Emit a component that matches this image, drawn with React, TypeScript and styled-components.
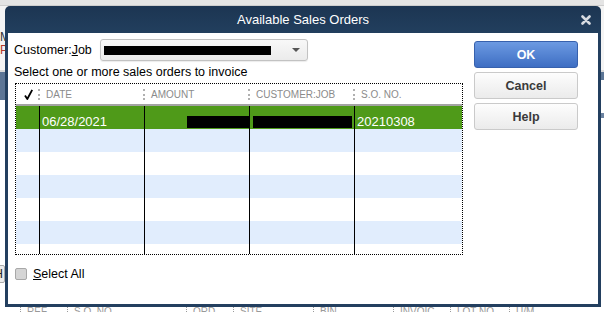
import React from 'react';
import styled, { createGlobalStyle } from 'styled-components';

const GlobalStyle = createGlobalStyle`
  html, body {
    margin: 0;
    padding: 0;
  }
  body {
    font-family: 'Liberation Sans', Arial, sans-serif;
    background: #fff;
  }
`;

const Desktop = styled.div`
  position: relative;
  width: 604px;
  height: 312px;
  overflow: hidden;
  background: #fff;
`;

/* ---------- the app behind the dialog ---------- */

const BackApp = styled.div`
  display: flex;
  flex-direction: column;
  height: 100%;
`;

const TopStrip = styled.div`
  height: 5px;
  background: #e4e4e4;
  border-bottom: 1px solid #cdcdcd;
`;

const MenuArea = styled.div`
  height: 64px;
  background: #f4f4f4;
  display: flex;
  justify-content: space-between;
  border-bottom: 2px solid #d8d8d8;
`;

const MenuLetters = styled.div`
  display: flex;
  flex-direction: column;
  padding-top: 25px;
  font-size: 12px;
  line-height: 13px;
`;

const MenuLetter = styled.span<{ $red?: boolean }>`
  color: ${(p) => (p.$red ? '#b23a2a' : '#333')};
`;

const BandRow = styled.div`
  height: 28px;
  display: flex;
  justify-content: space-between;
`;

const Band = styled.div<{ $h: number }>`
  width: 30px;
  height: ${(p) => p.$h}px;
  background: #5c7595;
`;

const MidArea = styled.div`
  flex: 1;
  display: flex;
  justify-content: space-between;
`;

const MidLeft = styled.div`
  display: flex;
  flex-direction: column;
  justify-content: flex-end;
  padding-bottom: 23px;
`;

const StubButton = styled.div`
  width: 22px;
  height: 18px;
  margin-left: -17px;
  box-sizing: border-box;
  border: 1px solid #aaa;
  border-radius: 2px;
  background: #ececec;
  font-size: 12px;
  line-height: 16px;
  text-align: right;
  padding-right: 1px;
  color: #222;
`;

const MidRight = styled.div`
  display: flex;
  flex-direction: column;
  padding-top: 13px;
  gap: 4px;
  align-items: flex-end;
`;

const Tick = styled.div<{ $color: string }>`
  width: 4px;
  height: 5px;
  background: ${(p) => p.$color};
`;

const BottomHeader = styled.div`
  height: 6px;
  display: flex;
  padding-left: 20px;
  overflow: hidden;
`;

const BottomCol = styled.div<{ $w: number }>`
  width: ${(p) => p.$w}px;
  flex: none;
  border-left: 1px dotted #999;
  padding-left: 6px;
  font-size: 10px;
  line-height: 12px;
  color: #999;
  text-transform: uppercase;
`;

/* ---------- the dialog window ---------- */

const Dialog = styled.div`
  position: absolute;
  left: 5px;
  top: 6px;
  width: 596px;
  height: 301px;
  display: flex;
  flex-direction: column;
`;

const TitleBar = styled.div`
  height: 27px;
  flex: none;
  display: flex;
  align-items: center;
  padding: 0 10px 0 30px;
  border-radius: 5px 5px 0 0;
  background: linear-gradient(#1c3552, #223f5e);
  color: #fff;
`;

const Title = styled.div`
  flex: 1;
  text-align: center;
  font-size: 13px;
  padding-right: 10px;
`;

const CloseIcon = () => (
  <svg width="10" height="10" viewBox="0 0 10 10">
    <path d="M1.5 1.5 L8.5 8.5 M8.5 1.5 L1.5 8.5" stroke="#d7dbe1" strokeWidth="2.6" strokeLinecap="round" />
  </svg>
);

const Body = styled.div`
  flex: 1;
  display: flex;
  background: #fff;
  border: 3px solid #233f5f;
  border-top: none;
  padding: 6px 0 0 6px;
`;

const LeftPane = styled.div`
  width: 449px;
  display: flex;
  flex-direction: column;
  font-size: 12.5px;
  color: #000;
`;

const CustomerRow = styled.div`
  display: flex;
  align-items: center;
  height: 22px;
`;

const Label = styled.span`
  width: 86px;
`;

const Under = styled.span`
  text-decoration: underline;
`;

const Dropdown = styled.div`
  width: 208px;
  height: 22px;
  box-sizing: border-box;
  display: flex;
  align-items: center;
  border: 1px solid #c2c2c2;
  border-radius: 3px;
  background: linear-gradient(#f8f8f8, #ebebeb);
  box-shadow: 0 1px 1px rgba(0, 0, 0, 0.08);
`;

const Redacted = styled.div<{ $w: number; $h: number }>`
  width: ${(p) => p.$w}px;
  height: ${(p) => p.$h}px;
  background: #000;
  flex: none;
`;

const Arrow = styled.div`
  margin-left: auto;
  margin-right: 7px;
  width: 0;
  height: 0;
  border-left: 4px solid transparent;
  border-right: 4px solid transparent;
  border-top: 4px solid #555;
`;

const Hint = styled.div`
  margin-top: 4px;
  line-height: 14px;
`;

const Table = styled.div`
  margin: 4px 0 0 1px;
  width: 448px;
  height: 172px;
  box-sizing: border-box;
  border: 1px dotted #000;
  overflow: hidden;
`;

const columns = '23px 105px 105px 105px 1fr';

const HeaderRow = styled.div`
  display: grid;
  grid-template-columns: ${columns};
  height: 20px;
  border-bottom: 2px solid #a3a3a3;
  align-items: center;
`;

const HeadCell = styled.div`
  display: flex;
  align-items: center;
  gap: 6px;
  font-size: 10px;
  color: #8b8b8b;
  text-transform: uppercase;
  white-space: nowrap;
`;

const CheckHead = styled.div`
  display: flex;
  justify-content: center;
  padding-left: 2px;
`;

const Sep = styled.span`
  width: 0;
  height: 11px;
  border-left: 2px dotted #b0b0b0;
  margin-left: -1px;
`;

const Row = styled.div<{ $tone: 'selected' | 'alt' | 'plain' }>`
  display: grid;
  grid-template-columns: ${columns};
  height: 23px;
  background: ${(p) =>
    p.$tone === 'selected' ? '#4f9a19' : p.$tone === 'alt' ? '#e1edfd' : '#fff'};
  color: ${(p) => (p.$tone === 'selected' ? '#fff' : '#000')};
`;

const Cell = styled.div<{ $align?: 'left' | 'right'; $line?: boolean }>`
  display: flex;
  align-items: flex-end;
  justify-content: ${(p) => (p.$align === 'right' ? 'flex-end' : 'flex-start')};
  border-left: ${(p) => (p.$line ? '1px solid #000' : 'none')};
  padding-left: 2px;
  font-size: 13px;
  line-height: 15px;
`;

const CellBox = styled(Redacted)`
  margin-bottom: 1px;
`;

const SelectAllRow = styled.label`
  display: flex;
  align-items: center;
  gap: 6px;
  margin: 12px 0 0 1px;
  height: 14px;
`;

const CheckBox = styled.span`
  width: 12px;
  height: 12px;
  box-sizing: border-box;
  border: 1px solid #a8a8a8;
  border-radius: 2px;
  background: #d5d5d5;
`;

const ButtonColumn = styled.div`
  margin: 2px 0 0 11px;
  width: 104px;
  display: flex;
  flex-direction: column;
  gap: 4px;
`;

const Button = styled.button<{ $primary?: boolean }>`
  height: 27px;
  box-sizing: border-box;
  border-radius: 3px;
  font-family: 'Liberation Sans', Arial, sans-serif;
  font-size: 12.5px;
  font-weight: bold;
  padding: 0;
  border: 1px solid ${(p) => (p.$primary ? '#3761ad' : '#cacaca')};
  background: ${(p) =>
    p.$primary ? 'linear-gradient(#6c9ae2, #3e6ec3)' : 'linear-gradient(#fdfdfd, #ebebeb)'};
  color: ${(p) => (p.$primary ? '#fff' : '#3a3a3a')};
`;

const CheckMark = () => (
  <svg width="9" height="11" viewBox="0 0 9 11">
    <path d="M1 6.5 L3.3 10 L8.2 0.8" stroke="#000" strokeWidth="1.8" fill="none" strokeLinejoin="round" />
  </svg>
);

type Order = { date: string; soNo: string };

const orders: Order[] = [{ date: '06/28/2021', soNo: '20210308' }];
const emptyRows = 6;

const headers = ['Date', 'Amount', 'Customer:Job', 'S.O. No.'];
const bottomCols: [string, number][] = [
  ['Ref', 40],
  ['S.O. No', 112],
  ['Ord', 40],
  ['Site', 73],
  ['Bin', 73],
  ['Invoic', 50],
  ['Lot No', 52],
  ['U/M', 60],
];

export default function App() {
  return (
    <Desktop>
      <GlobalStyle />
      <BackApp>
        <TopStrip />
        <MenuArea>
          <MenuLetters>
            <MenuLetter>M</MenuLetter>
            <MenuLetter $red>P</MenuLetter>
          </MenuLetters>
        </MenuArea>
        <BandRow>
          <Band $h={28} />
          <Band $h={8} />
        </BandRow>
        <MidArea>
          <MidLeft>
            <StubButton>H</StubButton>
          </MidLeft>
          <MidRight>
            <Tick $color="#6c83a1" />
          </MidRight>
        </MidArea>
        <BottomHeader>
          {bottomCols.map(([name, w]) => (
            <BottomCol key={name} $w={w}>
              {name}
            </BottomCol>
          ))}
        </BottomHeader>
      </BackApp>

      <Dialog>
        <TitleBar>
          <Title>Available Sales Orders</Title>
          <CloseIcon />
        </TitleBar>
        <Body>
          <LeftPane>
            <CustomerRow>
              <Label>
                Customer:<Under>J</Under>ob
              </Label>
              <Dropdown>
                <Redacted $w={167} $h={9} style={{ marginLeft: 3 }} />
                <Arrow />
              </Dropdown>
            </CustomerRow>
            <Hint>Select one or more sales orders to invoice</Hint>
            <Table>
              <HeaderRow>
                <CheckHead>
                  <CheckMark />
                </CheckHead>
                {headers.map((h) => (
                  <HeadCell key={h}>
                    <Sep />
                    {h}
                  </HeadCell>
                ))}
              </HeaderRow>
              {orders.map((o) => (
                <Row key={o.soNo} $tone="selected">
                  <Cell />
                  <Cell $line>{o.date}</Cell>
                  <Cell $line $align="right">
                    <CellBox $w={62} $h={12} />
                  </Cell>
                  <Cell $line>
                    <CellBox $w={99} $h={12} style={{ marginLeft: 1 }} />
                  </Cell>
                  <Cell $line>{o.soNo}</Cell>
                </Row>
              ))}
              {Array.from({ length: emptyRows }).map((_, i) => (
                <Row key={i} $tone={i % 2 === 0 ? 'alt' : 'plain'}>
                  <Cell />
                  <Cell $line />
                  <Cell $line />
                  <Cell $line />
                  <Cell $line />
                </Row>
              ))}
            </Table>
            <SelectAllRow>
              <CheckBox />
              <span>
                <Under>S</Under>elect All
              </span>
            </SelectAllRow>
          </LeftPane>
          <ButtonColumn>
            <Button $primary>OK</Button>
            <Button>Cancel</Button>
            <Button>Help</Button>
          </ButtonColumn>
        </Body>
      </Dialog>
    </Desktop>
  );
}
